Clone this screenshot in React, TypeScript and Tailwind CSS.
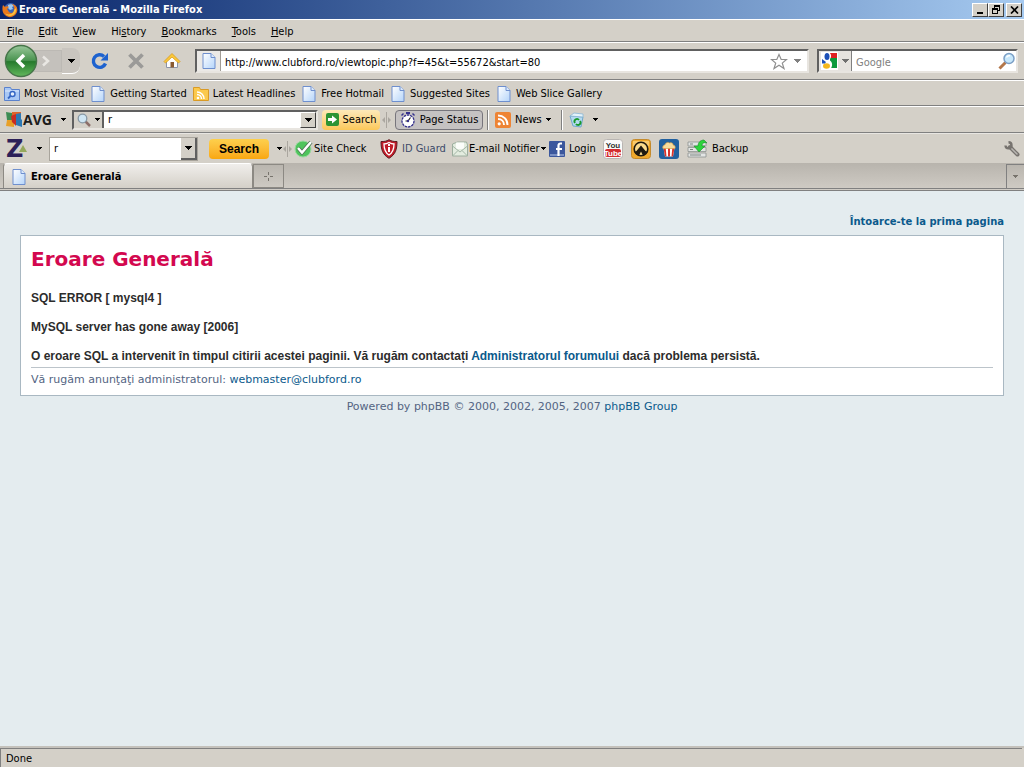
import React from 'react';

interface IconProps {
  className?: string;
}

const Caret: React.FC<IconProps> = ({ className = 'text-black' }) => (
  <svg width="7" height="4" viewBox="0 0 7 4" className={`shrink-0 ${className}`} shapeRendering="crispEdges">
    <path d="M0 0h7v1H6v1H5v1H4v1H3V3H2V2H1V1H0z" fill="currentColor" />
  </svg>
);

const SmallCaret: React.FC<IconProps> = ({ className = 'text-black' }) => (
  <svg width="5" height="3" viewBox="0 0 5 3" className={`shrink-0 ${className}`} shapeRendering="crispEdges">
    <path d="M0 0h5v1H4v1H3v1H2V2H1V1H0z" fill="currentColor" />
  </svg>
);

const FirefoxIcon = () => (
  <svg width="16" height="16" viewBox="0 0 16 16" className="shrink-0">
    <circle cx="8.5" cy="7.5" r="6.5" fill="#3c64b4" />
    <path d="M6 3c2-1.500 5-1 6 1l-2 1 1 2-3 1-2-2z" fill="#9cc8f0" />
    <path d="M1 3l2 2c1-1 3-1 4 0L5 7l2 3c2 2 5 1 5-2 1-3-1-5-2-6 5 1 6 5 5 8-2 5-8 7-12 3C0 11 0 6 1 3z" fill="#e8781c" />
    <path d="M14 6c1 4-2 8-6 8-2 0-4-1-5-3 3 3 9 1 9-3l2-2z" fill="#f8c040" />
  </svg>
);

const PageIcon = () => (
  <svg width="16" height="18" viewBox="0 0 16 18" className="shrink-0">
    <defs>
      <linearGradient id="pageFill" x1="0" y1="0" x2="1" y2="1">
        <stop offset="0" stopColor="#ffffff" />
        <stop offset="1" stopColor="#b4d4fa" />
      </linearGradient>
    </defs>
    <path d="M2 1.500h8l4 4v11H2z" fill="url(#pageFill)" stroke="#6e8fce" />
    <path d="M10 1.500v4h4" fill="#dceafc" stroke="#6e8fce" />
  </svg>
);

const SearchFolderIcon = () => (
  <svg width="16" height="16" viewBox="0 0 16 16" className="shrink-0">
    <path d="M.5 1.500h6l1 2h8v11H.5z" fill="#a9c8f5" stroke="#5b82cc" />
    <path d="M1 4.500h14v1H1z" fill="#dbe9fc" />
    <circle cx="8.500" cy="8" r="2.500" fill="#e6f0fd" stroke="#3566c4" strokeWidth="1.400" />
    <path d="M6.500 10L4 12.500" stroke="#3566c4" strokeWidth="1.800" />
  </svg>
);

const FeedFolderIcon = () => (
  <svg width="16" height="16" viewBox="0 0 16 16" className="shrink-0">
    <path d="M.5 1.500h6l1 2h8v11H.5z" fill="#fbc94c" stroke="#d99a26" />
    <circle cx="5" cy="12" r="1.300" fill="#fff" />
    <path d="M4 8.500c2.500 0 4.500 2 4.500 4.500M4 6c4 0 7 3 7 7" fill="none" stroke="#fff" strokeWidth="1.500" />
  </svg>
);

const BackForward = () => (
  <div className="flex h-8 items-center">
    <button aria-label="Back" className="z-10">
      <svg width="34" height="34" viewBox="0 0 34 34">
        <defs>
          <linearGradient id="backFill" x1="0" y1="0" x2="0" y2="1">
            <stop offset="0" stopColor="#9ac89b" />
            <stop offset=".48" stopColor="#4a9450" />
            <stop offset=".52" stopColor="#267a2d" />
            <stop offset="1" stopColor="#62b85c" />
          </linearGradient>
        </defs>
        <circle cx="17" cy="17" r="15.500" fill="url(#backFill)" stroke="#47764a" strokeWidth="1.500" />
        <path d="M20 11l-6 6 6 6" fill="none" stroke="#fff" strokeWidth="3.500" />
      </svg>
    </button>
    <button aria-label="Forward" className="-ml-2 flex h-[22px] w-8 items-center justify-center border border-[#bcb9b4] bg-[#c4c1bc]">
      <svg width="10" height="12" viewBox="0 0 10 12">
        <path d="M2 1.500L7 6l-5 4.500" fill="none" stroke="#e9e7e3" strokeWidth="2.500" />
      </svg>
    </button>
    <button aria-label="Recent pages" className="flex h-[26px] w-[18px] items-center justify-center rounded-r-lg border-b border-white bg-[#c9c5bf]">
      <Caret />
    </button>
  </div>
);

const ReloadIcon = () => (
  <svg width="18" height="18" viewBox="0 0 18 18">
    <path d="M14.500 11.500A6.300 6.300 0 1 1 13 4.500" fill="none" stroke="#1d62cf" strokeWidth="3.400" />
    <path d="M17 1v7.500H9.500z" fill="#1d62cf" />
  </svg>
);

const StopIcon = () => (
  <svg width="18" height="18" viewBox="0 0 18 18">
    <path d="M2.500 2.500l13 13M15.500 2.500l-13 13" stroke="#9b9a98" strokeWidth="3.800" />
  </svg>
);

const HomeIcon = () => (
  <svg width="18" height="18" viewBox="0 0 18 18">
    <path d="M3.500 8.500L9 4l5.500 4.500v7h-11z" fill="#fdfdfd" stroke="#8a93a8" />
    <path d="M7.500 10h3.500v5.500H7.500z" fill="#8a5a30" />
    <path d="M1 9.500L9 1.500l8 8-1.500 1.500L9 5l-6.500 6z" fill="#fbc83a" stroke="#d79a1c" strokeWidth=".8" />
  </svg>
);

const StarIcon = () => (
  <svg width="18" height="17" viewBox="0 0 18 17">
    <path d="M9 1.500l2.200 5h5.300l-4.200 3.600 1.700 5.400L9 12.300l-5 3.200 1.700-5.400L1.500 6.500h5.300z" fill="#fff" stroke="#8f8f8f" strokeWidth="1.200" />
  </svg>
);

const GoogleIcon = () => (
  <svg width="17" height="18" viewBox="0 0 17 18" className="shrink-0">
    <path d="M0 0h17v18H0z" fill="#fff" />
    <path d="M9 1h7v5H9z" fill="#e02020" />
    <path d="M9 6h7v10H9z" fill="#0c9a3c" />
    <path d="M7 0c4 1 4 6 1 8 4 2 4 6 1 10H0v-4l6-3C2 9 1 4 4 0z" fill="#fff" />
    <ellipse cx="6" cy="4.500" rx="2.500" ry="3.500" fill="#1c50b8" />
    <ellipse cx="5.500" cy="14" rx="3.500" ry="2.700" fill="#f4b71c" />
    <path d="M1 7l4 3-1 1.500H1z" fill="#1c50b8" />
  </svg>
);

const GlassIcon = () => (
  <svg width="18" height="18" viewBox="0 0 18 18">
    <path d="M7.500 10.500L1.500 16.500" stroke="#b3774a" strokeWidth="3" />
    <circle cx="11" cy="6.500" r="5" fill="#c8e8fb" stroke="#7b9fc6" strokeWidth="1.500" />
    <path d="M8.500 5.500c.5-1.500 2-2 3.500-1.800" stroke="#fff" fill="none" strokeWidth="1.500" />
  </svg>
);

const GreyGlassIcon = () => (
  <svg width="14" height="14" viewBox="0 0 14 14">
    <path d="M8.500 8.500l4.500 4.500" stroke="#8d6f6a" strokeWidth="2.500" />
    <circle cx="5.500" cy="5.500" r="4.300" fill="#cfe6f4" stroke="#8899a6" strokeWidth="1.300" />
  </svg>
);

const AvgLogo = () => (
  <svg width="17" height="17" viewBox="0 0 17 17" className="shrink-0">
    <path d="M0 1l6 1v7H1z" fill="#3c8c54" />
    <path d="M6 1h9v8H6z" fill="#e0642c" />
    <path d="M1 9h7v7l-8-1z" fill="#e8a028" />
    <path d="M10 3l5-1v6l1 1v7l-6-2z" fill="#2c78b4" />
    <path d="M5 5l5-2v12l-4-4z" fill="#c82c24" />
  </svg>
);

const GoArrowIcon = () => (
  <svg width="13" height="13" viewBox="0 0 13 13" className="shrink-0">
    <rect width="13" height="13" rx="2" fill="#2c9434" />
    <path d="M2 5h4V2.500L11 6.500l-5 4V8H2z" fill="#fff" />
  </svg>
);

const StopwatchIcon = () => (
  <svg width="16" height="16" viewBox="0 0 16 16" className="shrink-0">
    <path d="M6 0h4v2H6zM1 3l2-2 1 1-2 2zM15 3l-2-2-1 1 2 2z" fill="#34308c" />
    <circle cx="8" cy="9" r="6" fill="#fff" stroke="#34308c" strokeWidth="1.300" strokeDasharray="2.500 .8" />
    <path d="M8 9l2.500-3.500M8 9H5.500" stroke="#222" strokeWidth="1.200" />
    <circle cx="8" cy="9" r="1.200" fill="#34308c" />
  </svg>
);

const RssIcon = () => (
  <svg width="16" height="16" viewBox="0 0 16 16" className="shrink-0">
    <rect width="16" height="16" rx="2" fill="#ee8434" />
    <circle cx="4.200" cy="11.800" r="1.600" fill="#fff" />
    <path d="M3 7c3.500 0 6 2.500 6 6M3 3.500c5.500 0 9.500 4 9.500 9.500" fill="none" stroke="#fff" strokeWidth="1.900" />
  </svg>
);

const BinIcon = () => (
  <svg width="16" height="16" viewBox="0 0 16 16" className="shrink-0">
    <path d="M1 4l13 1-2 10-8-1z" fill="#b4daf0" stroke="#72a8cc" />
    <path d="M1 4l4-3 9 1v3z" fill="#e4f3fb" stroke="#8ab6d4" strokeWidth=".8" />
    <path d="M6 11a2.500 2.500 0 0 1 4-3M11 9a2.500 2.500 0 0 1-4 3" fill="none" stroke="#199a2c" strokeWidth="1.800" />
  </svg>
);

const ZLogo = () => (
  <svg width="23" height="29" viewBox="0 0 23 29" className="shrink-0">
    <text x="0" y="23" fontSize="24" fontWeight="700" fontFamily="DejaVu Sans, sans-serif" fill="#2c2058">Z</text>
    <path d="M17 11l4 7h-8z" fill="#94a85c" />
  </svg>
);

const CheckIcon = () => (
  <svg width="20" height="18" viewBox="0 0 20 18" className="shrink-0">
    <circle cx="9" cy="9" r="8" fill="#4fc45c" stroke="#9ad89e" />
    <path d="M4 8l4 4.500L17 2" fill="none" stroke="#4b6e50" strokeWidth="4" />
    <path d="M4 8l4 4.500L17 2" fill="none" stroke="#fff" strokeWidth="2.500" />
  </svg>
);

const ShieldIcon = () => (
  <svg width="18" height="20" viewBox="0 0 18 20" className="shrink-0">
    <path d="M9 .7c2.500 1.600 5 2 8 1.800 0 8-1.500 13-8 16.800C2.500 15.500 1 10.500 1 2.500c3 .2 5.500-.2 8-1.800z" fill="#c01c28" stroke="#5e1a20" />
    <path d="M9 3.500c1.700 1 3.500 1.500 5 1.500 0 5-1 8.500-5 11-4-2.500-5-6-5-11 1.500 0 3.300-.5 5-1.500z" fill="none" stroke="#fff" strokeWidth="1.300" />
    <path d="M8 5h2v2H8zM8 8h2v5H8z" fill="#fff" />
  </svg>
);

const MailIcon = () => (
  <svg width="16" height="16" viewBox="0 0 16 16" className="shrink-0">
    <path d="M.5 3l5-2h9l1 3v11H.5z" fill="#e3ecdf" stroke="#9cae9e" />
    <path d="M4 1.500h8V8H4z" fill="#fbfdfa" />
    <path d="M.5 5l7.500 6 7.500-6M.5 15L6 9.500M15.500 15L10 9.500" fill="none" stroke="#a3b6a6" />
  </svg>
);

const FacebookIcon = () => (
  <svg width="16" height="16" viewBox="0 0 16 16" className="shrink-0">
    <rect width="16" height="16" rx="1" fill="#3b579d" />
    <path d="M1 13h14v2H1z" fill="#7a90c4" />
    <path d="M13 2.500h-1.500a2 2 0 0 0-2 2V15M7 8h6" fill="none" stroke="#fff" strokeWidth="2.200" />
  </svg>
);

const YouTubeIcon = () => (
  <svg width="20" height="20" viewBox="0 0 20 20">
    <rect x=".5" y=".5" width="19" height="19" rx="3" fill="#fafafa" stroke="#b9b5b2" />
    <rect x="2" y="10" width="16" height="8" rx="2" fill="#d42c30" />
    <text x="10" y="9" textAnchor="middle" fontSize="8" fontWeight="700" fontFamily="Liberation Sans Narrow, Liberation Sans, sans-serif" fill="#333">You</text>
    <text x="10" y="17" textAnchor="middle" fontSize="8" fontWeight="700" fontFamily="Liberation Sans Narrow, Liberation Sans, sans-serif" fill="#fff">Tube</text>
  </svg>
);

const GroovesharkIcon = () => (
  <svg width="20" height="20" viewBox="0 0 20 20">
    <rect x=".5" y=".5" width="19" height="19" rx="3" fill="#f0a92c" stroke="#c48a2c" />
    <path d="M2 2h16v5H2z" fill="#f8ca6c" />
    <circle cx="10" cy="10" r="6.800" fill="#fadb8c" stroke="#1f1a10" strokeWidth="1.600" />
    <path d="M3.500 13c3-1 4-4 6.500-6.500 2.500 2.500 3.500 5.500 6.500 6.500-1 2-3 3.500-4.500 3.500L10 12.500l-2 4c-1.500 0-3.500-1.500-4.500-3.500z" fill="#1f1a10" />
  </svg>
);

const PopcornIcon = () => (
  <svg width="20" height="20" viewBox="0 0 20 20">
    <rect width="20" height="20" rx="3" fill="#21609f" />
    <path d="M4.500 9h11L14 17.500H6z" fill="#fff" />
    <path d="M4.500 9h2.200l.8 8.500H6zM9 9h2v8.500H9zM13.300 9h2.200L14 17.500h-1.500z" fill="#d8342c" />
    <path d="M4 9.500c-1-2 1-4 2-3.500 0-2 3-3.500 4.500-2 2-1 4 .5 3.500 2 2 0 2.500 2 2 3.500z" fill="#f8dc9c" stroke="#d6a04c" strokeWidth=".7" />
  </svg>
);

const BackupIcon = () => (
  <svg width="21" height="20" viewBox="0 0 21 20" className="shrink-0">
    <path d="M1 3h18v4H1zM1 8.500h18v4H1zM1 14h18v4H1z" fill="#e3e5e4" stroke="#8d9390" strokeWidth=".8" />
    <path d="M3 5h3M3 10.500h3M3 16h11" stroke="#7b8380" />
    <path d="M7 7h4c0-4 3-6 6-6l3 3c-3-1-5 0-5 3h3l-6 6z" fill="#2cd43c" stroke="#1c8c2c" strokeWidth=".6" />
  </svg>
);

const WrenchIcon = () => (
  <svg width="16" height="16" viewBox="0 0 16 16">
    <path d="M6 6l7.500 7.500" stroke="#77736f" strokeWidth="4" strokeLinecap="round" />
    <path d="M7 7l6 6" stroke="#b9b6b2" strokeWidth="1.500" strokeLinecap="round" />
    <path d="M1.500 4.500a3 3 0 1 0 3-3.200" fill="none" stroke="#77736f" strokeWidth="2.400" />
  </svg>
);

const Separator = () => <span className="h-5 w-0.5 border-l border-r border-l-[#808080] border-r-white" />;

const Grip = () => (
  <svg width="9" height="16" viewBox="0 0 9 16" className="shrink-0">
    <path d="M4.500 0v16" stroke="#aaa69f" />
    <path d="M3 5v6L0 8zM6 5v6l3-3z" fill="#aaa69f" />
  </svg>
);

const menus = ['File', 'Edit', 'View', 'History', 'Bookmarks', 'Tools', 'Help'];
const menuKeys = [0, 0, 0, 2, 0, 0, 0];

const bookmarks = [
  { label: 'Most Visited', icon: <SearchFolderIcon /> },
  { label: 'Getting Started', icon: <PageIcon /> },
  { label: 'Latest Headlines', icon: <FeedFolderIcon /> },
  { label: 'Free Hotmail', icon: <PageIcon /> },
  { label: 'Suggested Sites', icon: <PageIcon /> },
  { label: 'Web Slice Gallery', icon: <PageIcon /> },
];

const bevel = 'border border-t-white border-l-white border-b-[#404040] border-r-[#404040] bg-[#d4d0c8]';
const sunken = 'border-2 border-t-[#606060] border-l-[#606060] border-b-[#e8e5e0] border-r-[#e8e5e0] bg-white';

const TitleBar = () => (
  <header className="flex h-[19px] items-center bg-linear-to-r from-[#0a246a] to-[#a6caf0] px-0.5">
    <FirefoxIcon />
    <h1 className="ml-px flex-1 font-bold text-white">Eroare Generală - Mozilla Firefox</h1>
    <button aria-label="Minimize" className={`flex h-3.5 w-4 items-end justify-center pb-0.5 ${bevel}`}>
      <span className="h-0.5 w-1.5 bg-black" />
    </button>
    <button aria-label="Restore" className={`flex h-3.5 w-4 items-center justify-center ${bevel}`}>
      <svg width="10" height="10" viewBox="0 0 10 10" shapeRendering="crispEdges">
        <path d="M3 .5h6M3 1.500h6M3.500 0v4M8.500 0v6M6 5.500h3M1 3.500h6M1 4.500h6M1.500 3v6M6.500 3v6M1 8.500h6" stroke="#000" />
      </svg>
    </button>
    <button aria-label="Close" className={`ml-0.5 flex h-3.5 w-4 items-center justify-center ${bevel}`}>
      <svg width="9" height="8" viewBox="0 0 9 8">
        <path d="M1 .5l7 7M8 .5l-7 7" stroke="#000" strokeWidth="1.700" />
      </svg>
    </button>
  </header>
);

const MenuBar = () => (
  <nav className="flex h-[23px] items-center gap-[15px] border-b border-t border-b-[#808080] border-t-white px-[7px] pt-0.5">
    {menus.map((name, i) => (
      <button key={name}>
        {name.slice(0, menuKeys[i])}
        <u>{name[menuKeys[i]]}</u>
        {name.slice(menuKeys[i] + 1)}
      </button>
    ))}
  </nav>
);

const NavBar = () => (
  <div className="flex h-[38px] items-center border-b border-t border-b-[#808080] border-t-white pl-1 pr-1.5">
    <BackForward />
    <button aria-label="Reload" className="ml-[11px]"><ReloadIcon /></button>
    <button aria-label="Stop" className="ml-[18px]"><StopIcon /></button>
    <button aria-label="Home" className="ml-[18px]"><HomeIcon /></button>
    <div className={`ml-3.5 flex h-6 flex-1 items-center ${sunken}`}>
      <span className="flex h-full w-6 items-center justify-center border-r border-[#a09c96] bg-[#ebe9e6]">
        <PageIcon />
      </span>
      <input
        aria-label="Address"
        className="h-full min-w-0 flex-1 px-1 pt-0.5 outline-none"
        defaultValue="http://www.clubford.ro/viewtopic.php?f=45&t=55672&start=80"
      />
      <button aria-label="Bookmark this page"><StarIcon /></button>
      <button aria-label="Show history" className="px-1.5"><Caret className="text-[#808080]" /></button>
    </div>
    <div className={`ml-2 flex h-6 w-[201px] items-center ${sunken}`}>
      <button aria-label="Search engine" className="flex h-full items-center gap-1 border-r border-[#808080] bg-[#e6e3df] px-0.5">
        <GoogleIcon />
        <Caret className="text-[#707070]" />
      </button>
      <input
        aria-label="Web search"
        placeholder="Google"
        className="h-full min-w-0 flex-1 px-1 pt-0.5 outline-none placeholder:text-[#808080]"
      />
      <button aria-label="Search"><GlassIcon /></button>
    </div>
  </div>
);

const BookmarksBar = () => (
  <nav className="flex h-[26px] items-center gap-1.5 border-b border-t border-b-[#808080] border-t-white px-1 pt-0.5">
    {bookmarks.map((item) => (
      <a key={item.label} href="#" className="flex items-center gap-1 whitespace-nowrap">
        {item.icon}
        {item.label}
      </a>
    ))}
  </nav>
);

const AvgToolbar = () => (
  <div className="flex h-[27px] items-center border-b border-t border-b-[#808080] border-t-white pl-1.5">
    <button className="flex w-[66px] items-center">
      <AvgLogo />
      <span className="flex-1 text-left font-['Open_Sans',sans-serif] text-sm leading-4 font-bold text-[#1c1c1c]">AVG</span>
      <SmallCaret className="mr-1.5 text-black" />
    </button>
    <div className={`flex h-5 w-[246px] items-center ${sunken}`}>
      <button aria-label="Search type" className="flex h-full w-7 items-center justify-center gap-1 bg-[#d4d0c8]">
        <GreyGlassIcon />
        <SmallCaret />
      </button>
      <input aria-label="AVG search" defaultValue="r" className="h-full min-w-0 flex-1 border-l-2 border-[#606060] px-1 outline-none" />
      <button aria-label="Show searches" className={`flex h-4 w-4 items-center justify-center ${bevel}`}>
        <Caret />
      </button>
    </div>
    <button className="ml-1 flex h-5 w-[58px] items-center justify-center gap-1 rounded-sm bg-linear-to-b from-[#fde9b8] to-[#fbc858]">
      <GoArrowIcon />
      Search
    </button>
    <span className="ml-0.5 flex"><Grip /></span>
    <button className="ml-1 flex h-5 w-[88px] items-center justify-center gap-1 whitespace-nowrap rounded border border-[#77757c] bg-[#c5c2c2]">
      <StopwatchIcon />
      Page Status
    </button>
    <span className="ml-1 flex"><Separator /></span>
    <button className="ml-1.5 flex w-[58px] items-center gap-1">
      <RssIcon />
      News
      <SmallCaret />
    </button>
    <span className="ml-2 flex"><Separator /></span>
    <button aria-label="Recycle bin" className="ml-1.5 flex items-center gap-2">
      <BinIcon />
      <SmallCaret />
    </button>
  </div>
);

const ZToolbar = () => (
  <div className="flex h-[30px] items-center border-t border-[#e8e6e2] pl-1.5 pr-1">
    <button aria-label="Z menu" className="flex w-[43px] items-center gap-2">
      <ZLogo />
      <SmallCaret />
    </button>
    <div className="flex h-6 w-[149px] items-center border border-[#a8a49c] bg-white">
      <input aria-label="Toolbar search" defaultValue="r" className="h-full min-w-0 flex-1 px-1 outline-none" />
      <button aria-label="Show recent" className="flex h-full w-4 items-center justify-center border-b-2 border-r-2 border-[#606060] bg-[#d4d0c8]">
        <Caret />
      </button>
    </div>
    <button className="ml-[11px] h-5 w-[60px] rounded-sm bg-linear-to-b from-[#fdd04c] to-[#f9a70c] font-['Liberation_Sans',sans-serif] text-xs leading-5 font-bold">
      Search
    </button>
    <button aria-label="Search options" className="ml-2 flex items-center gap-px">
      <SmallCaret />
      <Grip />
    </button>
    <button className="ml-0.5 flex w-[86px] items-center whitespace-nowrap">
      <CheckIcon />
      Site Check
    </button>
    <button className="flex w-[72px] items-center gap-1 whitespace-nowrap text-[#3c4a68]">
      <ShieldIcon />
      ID Guard
    </button>
    <button className="flex w-[97px] items-center gap-px whitespace-nowrap">
      <MailIcon />
      E-mail Notifier
      <SmallCaret />
    </button>
    <button className="flex w-[54px] items-center gap-1">
      <FacebookIcon />
      Login
    </button>
    <div className="flex items-center gap-2">
      <button aria-label="Video"><YouTubeIcon /></button>
      <button aria-label="Music"><GroovesharkIcon /></button>
      <button aria-label="Movies"><PopcornIcon /></button>
      <button className="flex items-center gap-1">
        <BackupIcon />
        Backup
      </button>
    </div>
    <button aria-label="Options" className="ml-auto"><WrenchIcon /></button>
  </div>
);

const TabStrip = () => (
  <div className="flex h-7 items-start border-b border-[#808080] bg-linear-to-b from-[#b8b4ad] to-[#d0ccc5]">
    <div className="flex h-[26px] flex-1 items-end border-b border-[#808080] pl-[3px]">
      <button className="flex h-[25px] w-[250px] items-center gap-1 rounded-t border border-b-0 border-[#8c8983] border-t-white bg-linear-to-b from-[#f0eeeb] to-[#d4d0c8] pl-[7px] pt-0.5 font-bold">
        <PageIcon />
        Eroare Generală
      </button>
      <button aria-label="New tab" className="flex h-6 w-[31px] items-center justify-center border border-[#8c8983] text-[#77736c]">
        <svg width="9" height="9" viewBox="0 0 9 9" shapeRendering="crispEdges">
          <path d="M4 0h1v3H4zM4 6h1v3H4zM0 4h3v1H0zM6 4h3v1H6z" fill="currentColor" />
        </svg>
      </button>
      <button aria-label="List all tabs" className="ml-auto flex h-6 w-[18px] items-center justify-center border-l border-t border-[#808080]">
        <SmallCaret className="text-[#77736c]" />
      </button>
    </div>
  </div>
);

const ErrorPage = () => (
  <main className="flex-1 bg-[#e4ecef] px-5 font-['DejaVu_Sans',sans-serif] text-[11px] leading-3 text-[#536482]">
    <p className="pt-[25px] text-right text-[10px] leading-3 font-bold">
      <a href="#" className="text-[#0b5a8c]">Întoarce-te la prima pagina</a>
    </p>
    <section className="mt-[7px] border border-[#a9b8c2] bg-white px-2.5 pb-[9px] pt-2.5">
      <h2 className="text-xl leading-[26px] font-bold text-[#d3084f]">Eroare Generală</h2>
      <div className="mt-[19px] space-y-3.5 border-b border-[#bcc4ca] pb-[3px] font-['Liberation_Sans',sans-serif] text-xs leading-[15px] font-bold text-[#2c2c2c]">
        <p>SQL ERROR [ mysql4 ]</p>
        <p>MySQL server has gone away [2006]</p>
        <p>
          O eroare SQL a intervenit în timpul citirii acestei paginii. Vă rugăm contactați{' '}
          <a href="#" className="text-[#0b5a8c]">Administratorul forumului</a> dacă problema persistă.
        </p>
      </div>
      <p className="mt-1.5">
        Vă rugăm anunţaţi administratorul: <a href="#" className="text-[#0b5a8c]">webmaster@clubford.ro</a>
      </p>
    </section>
    <p className="mt-[5px] text-center">
      Powered by phpBB © 2000, 2002, 2005, 2007 <a href="#" className="text-[#0b5a8c]">phpBB Group</a>
    </p>
  </main>
);

const App: React.FC = () => (
  <div className="flex min-h-screen flex-col bg-[#d4d0c8] font-['DejaVu_Sans_Condensed','DejaVu_Sans',sans-serif] text-[11px] leading-4 text-black">
    <TitleBar />
    <MenuBar />
    <NavBar />
    <BookmarksBar />
    <AvgToolbar />
    <ZToolbar />
    <TabStrip />
    <ErrorPage />
    <footer className="border-b border-t-2 border-b-white border-t-[#c4c1bb]">
      <div className="mr-0.5 border-l border-t border-[#808080] pl-[5px] pt-0.5">Done</div>
    </footer>
  </div>
);

export default App;
